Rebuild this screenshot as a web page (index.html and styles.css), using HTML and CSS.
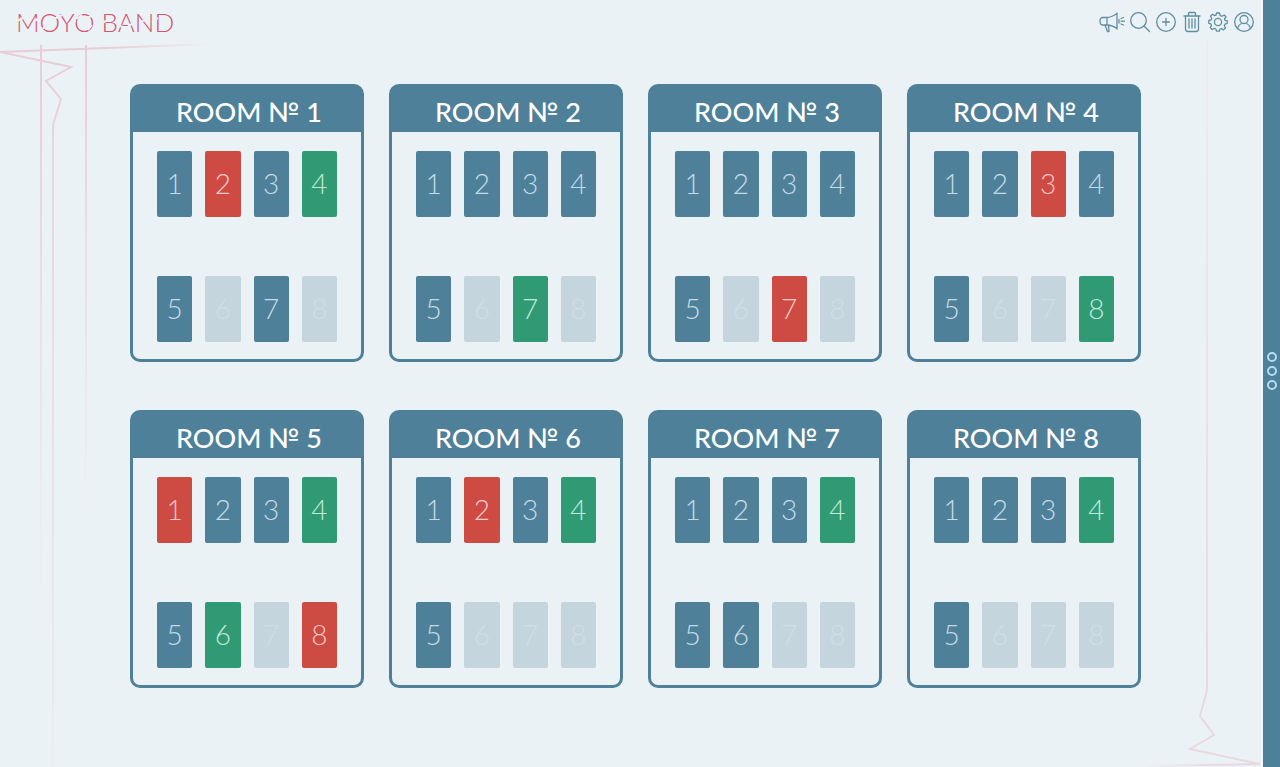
FILE: index.html
```html
<!DOCTYPE html>
<html lang="en">
<head>
<meta charset="utf-8">
<meta name="viewport" content="width=device-width, initial-scale=1">
<title>Moyo Band</title>
<link rel="stylesheet" href="styles.css">
</head>
<body class="page">
<svg class="decor decor-start" width="220" height="767" viewBox="0 0 220 767" fill="none" stroke-width="2" aria-hidden="true">
  <defs>
    <linearGradient id="fadeA" gradientUnits="userSpaceOnUse" x1="0" y1="45" x2="0" y2="620"><stop offset="0" stop-color="#e9cbd6"/><stop offset="1" stop-color="#e9d3dc" stop-opacity="0"/></linearGradient>
    <linearGradient id="fadeB" gradientUnits="userSpaceOnUse" x1="0" y1="45" x2="0" y2="520"><stop offset="0" stop-color="#e9cbd6"/><stop offset="1" stop-color="#e9d3dc" stop-opacity="0"/></linearGradient>
    <linearGradient id="fadeC" gradientUnits="userSpaceOnUse" x1="0" y1="45" x2="0" y2="767"><stop offset="0" stop-color="#e9cbd6"/><stop offset=".15" stop-color="#e8d7dd"/><stop offset="1" stop-color="#e6d7dd" stop-opacity=".2"/></linearGradient>
    <linearGradient id="fadeD" gradientUnits="userSpaceOnUse" x1="0" y1="0" x2="212" y2="0"><stop offset="0" stop-color="#e9cbd6"/><stop offset=".5" stop-color="#e9cbd6"/><stop offset="1" stop-color="#e9cbd6" stop-opacity="0"/></linearGradient>
  </defs>
  <path d="M41 45V620" stroke="url(#fadeA)"/>
  <path d="M86 45V520" stroke="url(#fadeB)"/>
  <path d="M212 44L0 52" stroke="url(#fadeD)"/>
  <path d="M0 52L71 67L46 81L61 99L53 125V767" stroke="url(#fadeC)"/>
</svg>
<svg class="decor decor-end" width="120" height="740" viewBox="0 0 120 740" fill="none" stroke-width="2" aria-hidden="true">
  <defs>
    <linearGradient id="fadeE" gradientUnits="userSpaceOnUse" x1="0" y1="0" x2="0" y2="660"><stop offset="0" stop-color="#ead8e0" stop-opacity=".2"/><stop offset="1" stop-color="#ead8e0"/></linearGradient>
    <linearGradient id="fadeF" gradientUnits="userSpaceOnUse" x1="0" y1="0" x2="117" y2="0"><stop offset="0" stop-color="#ead8e0" stop-opacity="0"/><stop offset=".6" stop-color="#ead8e0"/></linearGradient>
  </defs>
  <path d="M64 12V663L57 689L71 708L47 722L117 737" stroke="url(#fadeE)"/>
  <path d="M117 737L5 739" stroke="url(#fadeF)"/>
</svg>
<div class="workspace">
  <header class="topbar">
    <a class="brand" href="#">MOYO BAND
      <svg class="brand-cuts" width="156" height="24" viewBox="0 0 156 24" fill="none" aria-hidden="true"><path d="M1 11L7 8M18 11L24 8M26 19L34 14M38 9L46 5M52 14L60 11M60 9L66 5M72 20L76 15M68 9L76 6M86 13L94 9M102 15L109 18M112 16L120 12M124 13L130 9M136 12L142 8M144 18L153 14"/></svg>
    </a>
    <nav class="tools" aria-label="Tools">
      <button class="tool tool-wide" aria-label="Announcements"><svg width="26" height="22" viewBox="0 0 26 22"><path d="M4 6.500H8C12 6.500 15 4.500 18 2.500V17.500C15 15.500 12 14 8 14H4Q1 14 1 10.200T4 6.500ZM8 6.500V14M18 2V18M20 8.500V12M6 14L8.500 20.500H10L9.500 14M22 7.500L24.500 6.500M22 10.200H25.500M22 13L24.500 14"/></svg></button>
      <button class="tool" aria-label="Search"><svg width="22" height="22" viewBox="0 0 22 22"><circle cx="9.500" cy="9.500" r="7.800"/><path d="M15 15L20.500 20.500"/></svg></button>
      <button class="tool" aria-label="Add"><svg width="22" height="22" viewBox="0 0 22 22"><circle cx="11" cy="11" r="9.300"/><path d="M11 7.500V14.500M7.500 11H14.500"/></svg></button>
      <button class="tool" aria-label="Delete"><svg width="22" height="22" viewBox="0 0 22 22"><path d="M3 5H19M4.500 5V18Q4.500 20.500 7 20.500H15Q17.500 20.500 17.500 18V5M7.500 5V2.500Q7.500 1.500 8.500 1.500H13.500Q14.500 1.500 14.500 2.500V5M8 8V17M11 8V17M14 8V17"/></svg></button>
      <button class="tool" aria-label="Settings"><svg width="22" height="22" viewBox="0 0 22 22"><path d="M9.500 2H12.500L13.200 4.500L15 5.300L17.300 4L19 5.900L17.500 8L18.100 9.300L20.200 9.700V12.500L17.900 13.200L17.300 14.800L18.500 17L16.500 18.900L14.400 17.500L12.900 18.100L12.300 20.200H9.500L8.900 18L7.200 17.300L5.100 18.500L3.200 16.500L4.500 14.300L3.900 12.900L1.800 12.300V9.500L4 8.900L4.700 7.200L3.500 5.100L5.500 3.200L7.700 4.600L9 4.100Z"/><circle cx="11" cy="11" r="3.600"/></svg></button>
      <button class="tool" aria-label="Account"><svg width="22" height="22" viewBox="0 0 22 22"><circle cx="11" cy="11" r="9.300"/><circle cx="11" cy="8.500" r="4"/><path d="M4.500 17.500Q5.500 13.500 9 12.500M17.500 17.500Q16.500 13.500 13 12.500"/></svg></button>
    </nav>
  </header>
  <main class="rooms">
    <section class="room"><h2 class="room-title">ROOM № 1</h2><div class="slots">
      <button class="slot">1</button><button class="slot slot-red">2</button><button class="slot">3</button><button class="slot slot-green">4</button>
      <button class="slot">5</button><button class="slot" disabled>6</button><button class="slot">7</button><button class="slot" disabled>8</button>
    </div></section>
    <section class="room"><h2 class="room-title">ROOM № 2</h2><div class="slots">
      <button class="slot">1</button><button class="slot">2</button><button class="slot">3</button><button class="slot">4</button>
      <button class="slot">5</button><button class="slot" disabled>6</button><button class="slot slot-green">7</button><button class="slot" disabled>8</button>
    </div></section>
    <section class="room"><h2 class="room-title">ROOM № 3</h2><div class="slots">
      <button class="slot">1</button><button class="slot">2</button><button class="slot">3</button><button class="slot">4</button>
      <button class="slot">5</button><button class="slot" disabled>6</button><button class="slot slot-red">7</button><button class="slot" disabled>8</button>
    </div></section>
    <section class="room"><h2 class="room-title">ROOM № 4</h2><div class="slots">
      <button class="slot">1</button><button class="slot">2</button><button class="slot slot-red">3</button><button class="slot">4</button>
      <button class="slot">5</button><button class="slot" disabled>6</button><button class="slot" disabled>7</button><button class="slot slot-green">8</button>
    </div></section>
    <section class="room"><h2 class="room-title">ROOM № 5</h2><div class="slots">
      <button class="slot slot-red">1</button><button class="slot">2</button><button class="slot">3</button><button class="slot slot-green">4</button>
      <button class="slot">5</button><button class="slot slot-green">6</button><button class="slot" disabled>7</button><button class="slot slot-red">8</button>
    </div></section>
    <section class="room"><h2 class="room-title">ROOM № 6</h2><div class="slots">
      <button class="slot">1</button><button class="slot slot-red">2</button><button class="slot">3</button><button class="slot slot-green">4</button>
      <button class="slot">5</button><button class="slot" disabled>6</button><button class="slot" disabled>7</button><button class="slot" disabled>8</button>
    </div></section>
    <section class="room"><h2 class="room-title">ROOM № 7</h2><div class="slots">
      <button class="slot">1</button><button class="slot">2</button><button class="slot">3</button><button class="slot slot-green">4</button>
      <button class="slot">5</button><button class="slot">6</button><button class="slot" disabled>7</button><button class="slot" disabled>8</button>
    </div></section>
    <section class="room"><h2 class="room-title">ROOM № 8</h2><div class="slots">
      <button class="slot">1</button><button class="slot">2</button><button class="slot">3</button><button class="slot slot-green">4</button>
      <button class="slot">5</button><button class="slot" disabled>6</button><button class="slot" disabled>7</button><button class="slot" disabled>8</button>
    </div></section>
  </main>
</div>
<button class="rail" aria-label="Open side panel"><span class="dot"></span><span class="dot"></span><span class="dot"></span></button>
</body>
</html>
```
FILE: styles.css
```css
* { box-sizing: border-box; }

.page {
  position: relative;
  display: flex;
  min-height: 100vh;
  margin: 0;
  overflow-x: hidden;
  background: #ebf2f5;
  color: #4e8099;
  font-family: Lato, "Open Sans", sans-serif;
}

button {
  margin: 0;
  padding: 0;
  border: 0;
  font-family: inherit;
}

/* Thin background lines */
.decor { position: absolute; pointer-events: none; }
.decor-start { top: 0; left: 0; }
.decor-end { right: 17px; bottom: 0; }

.workspace {
  position: relative;
  flex: 1;
  min-width: 0;
}

.topbar {
  display: flex;
  justify-content: space-between;
  align-items: center;
  height: 44px;
  padding: 0 8px 0 16px;
}

.brand {
  position: relative;
  color: #d4566f;
  font-size: 26px;
  font-weight: 300;
  line-height: 24px;
  text-decoration: none;
  white-space: nowrap;
}

.brand-cuts {
  position: absolute;
  top: 0;
  left: 0;
  stroke: #ebf2f5;
  stroke-width: 2;
}

.tools { display: flex; gap: 4px; }

.tool {
  display: grid;
  place-items: center;
  width: 22px;
  height: 22px;
  background: none;
  color: #5f8da4;
}

.tool-wide { width: 26px; }

.tool svg {
  fill: none;
  stroke: currentColor;
  stroke-width: 1.3;
  stroke-linejoin: round;
  stroke-linecap: round;
}

.rooms {
  display: grid;
  grid-template-columns: repeat(4, 1fr);
  gap: 48px 25px;
  padding: 40px 122px 48px 130px;
}

.room {
  border: 3px solid #4e8099;
  border-radius: 10px;
  background: #ebf2f5;
}

.room-title {
  margin: 0;
  padding: 6px 0 2px 4px;
  background: #4e8099;
  color: #fff;
  font-size: 27px;
  font-weight: 500;
  line-height: 37px;
  text-align: center;
  white-space: nowrap;
}

.slots {
  display: grid;
  grid-template-columns: repeat(4, 1fr);
  gap: 59px 13px;
  padding: 19px 24px 17px;
}

.slot {
  height: 66px;
  padding-bottom: 2px;
  border-radius: 2px;
  background: #4e8099;
  color: #c5dce8;
  font-size: 28px;
  font-weight: 300;
  line-height: 32px;
}

.slot-red { background: #ce4b43; color: #f5c9c8; }
.slot-green { background: #309a75; color: #c0ead9; }
.slot:disabled { background: #c5d5de; color: #d0dee5; }

.rail {
  position: relative;
  display: flex;
  flex-direction: column;
  justify-content: center;
  align-items: center;
  gap: 4px;
  width: 17px;
  padding-bottom: 26px;
  background: #4e8099;
  box-shadow: -2px 0 0 #f4f7f8;
}

.dot {
  width: 10px;
  height: 10px;
  border: 2px solid #b5dcf0;
  border-radius: 50%;
}
```
